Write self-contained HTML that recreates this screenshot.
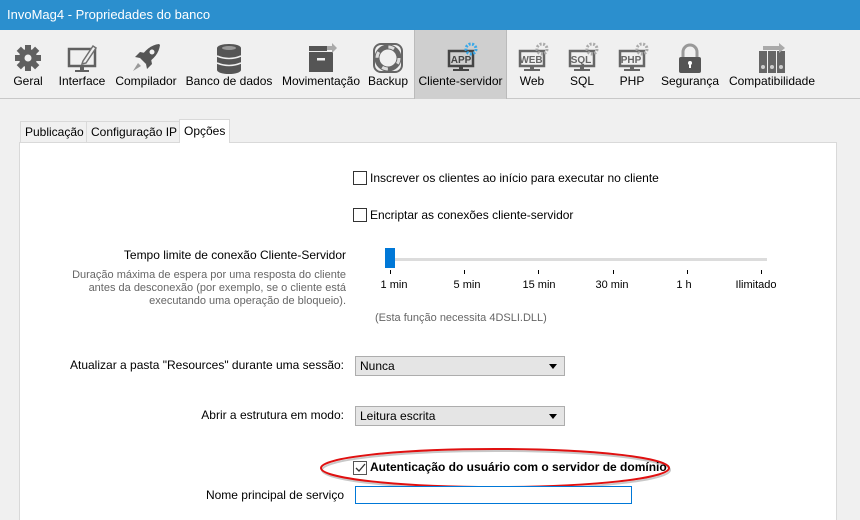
<!DOCTYPE html>
<html><head><meta charset="utf-8"><style>
*{margin:0;padding:0;box-sizing:border-box}
html{width:860px;height:520px;overflow:hidden}
body{width:860px;height:520px;overflow:hidden;background:#f0f0f0;font-family:"Liberation Sans",sans-serif;font-size:12px;color:#000;position:relative}
.a{position:absolute;white-space:nowrap}
#title{left:0;top:0;width:860px;height:30px;background:#2b8fce;color:#fff;font-size:13px;padding:7px 0 0 7px}
#tb{left:0;top:30px;width:860px;height:69px;border-bottom:1px solid #c8c8c8}
.ti{position:absolute;top:0;height:69px;text-align:center}
.ti span{position:absolute;left:0;right:0;top:44px;font-size:12px}
.ti svg{position:absolute;top:11px;left:50%;margin-left:-17px}
.tab{top:121px;height:22px;padding:3px 4px 0;border:1px solid #d9d9d9;border-bottom:none;background:#f0f0f0}
#panel{left:19px;top:142px;width:818px;height:380px;background:#fff;border:1px solid #d9d9d9;border-bottom:none}
.cb{width:14px;height:14px;border:1px solid #333;background:#fff}
.dd{height:20px;width:210px;background:#e5e5e5;border:1px solid #adadad;padding:2px 4px}
.dd:after{content:"";position:absolute;right:7px;top:7px;border:4px solid transparent;border-top:5px solid #000}
.r{text-align:right}
.g{color:#666;font-size:11px}
.tk{width:1px;height:4px;background:#000;top:270px}
.tl{top:279px;font-size:11px;transform:translateX(-50%)}
</style></head><body>
<div class="a" id="title">InvoMag4 - Propriedades do banco</div>
<div class="a" id="tb">
 <div class="ti" style="left:6px;width:44px"><svg width="34" height="34" viewBox="0 0 34 34"><g fill="#606060"><circle cx="17" cy="17" r="9"/><rect x="14" y="4" width="6" height="26"/><rect x="4" y="14" width="26" height="6"/><rect x="14" y="4" width="6" height="26" transform="rotate(45 17 17)"/><rect x="14" y="4" width="6" height="26" transform="rotate(-45 17 17)"/></g><circle cx="17" cy="17" r="3.5" fill="#f0f0f0"/></svg><span>Geral</span></div>
 <div class="ti" style="left:55px;width:54px"><svg width="34" height="34"><rect x="4" y="8" width="26" height="17" fill="none" stroke="#606060" stroke-width="2.5"/><rect x="15" y="25" width="4" height="4" fill="#606060"/><rect x="10" y="29" width="14" height="2" fill="#606060"/><path d="M18 20 L28 5 L31 7 L21 22 L17 23 Z" fill="#f0f0f0" stroke="#707070" stroke-width="1.5"/></svg><span>Interface</span></div>
 <div class="ti" style="left:113px;width:66px"><svg width="34" height="34"><path d="M30 3 C22 4 16 9 11 17 L17 23 C25 18 30 12 31 4 Z" fill="#555"/><path d="M11 17 L6 16 L11 11 L16 12 Z M17 23 L18 28 L23 23 L22 18Z" fill="#555"/><path d="M9 22 L4 30 L12 25 Z" fill="#999"/><circle cx="23" cy="11" r="2.5" fill="#f0f0f0"/></svg><span>Compilador</span></div>
 <div class="ti" style="left:184px;width:90px"><svg width="34" height="34"><ellipse cx="17" cy="7" rx="12" ry="4" fill="#555"/><rect x="5" y="7" width="24" height="22" fill="#555"/><ellipse cx="17" cy="29" rx="12" ry="4" fill="#555"/><ellipse cx="17" cy="7" rx="7" ry="2" fill="#999"/><path d="M5 15 Q17 20 29 15 M5 22 Q17 27 29 22" stroke="#f0f0f0" stroke-width="1.5" fill="none"/></svg><span>Banco de dados</span></div>
 <div class="ti" style="left:280px;width:82px"><svg width="34" height="34"><rect x="5" y="11" width="24" height="20" fill="#555"/><rect x="5" y="5" width="18" height="5" fill="#555"/><rect x="13" y="17" width="8" height="2.5" fill="#f0f0f0"/><path d="M23 5 h5 v-3 l5 5 l-5 5 v-3 h-5z" fill="#aaa"/></svg><span>Movimentação</span></div>
 <div class="ti" style="left:366px;width:44px"><svg width="34" height="34"><rect x="3" y="3" width="28" height="28" rx="7" fill="none" stroke="#666" stroke-width="2"/><circle cx="17" cy="17" r="11" fill="none" stroke="#666" stroke-width="5"/><circle cx="17" cy="17" r="11" fill="none" stroke="#ddd" stroke-width="3" stroke-dasharray="6 11.3"/></svg><span>Backup</span></div>
 <div class="ti" style="left:414px;width:93px;background:#cfcfcf;border-left:1px solid #bbb;border-right:1px solid #bbb"><svg width="34" height="34"><rect x="5" y="10" width="24" height="15" fill="none" stroke="#444" stroke-width="2.5"/><text x="17" y="22" font-size="10" font-weight="bold" text-anchor="middle" fill="#444" font-family="Liberation Sans">APP</text><rect x="15" y="25" width="4" height="3" fill="#444"/><rect x="9" y="28" width="16" height="2" fill="#444"/><circle cx="27" cy="8" r="5" fill="none" stroke="#3aa8e8" stroke-width="3" stroke-dasharray="2 1.5"/></svg><span>Cliente-servidor</span></div>
 <div class="ti" style="left:510px;width:44px"><svg width="34" height="34"><rect x="5" y="10" width="24" height="15" fill="none" stroke="#666" stroke-width="2.5"/><text x="16" y="22" font-size="10" font-weight="bold" text-anchor="middle" fill="#666" font-family="Liberation Sans">WEB</text><rect x="15" y="25" width="4" height="3" fill="#666"/><rect x="9" y="28" width="16" height="2" fill="#666"/><circle cx="27" cy="8" r="5" fill="none" stroke="#aaa" stroke-width="3" stroke-dasharray="2 1.5"/></svg><span>Web</span></div>
 <div class="ti" style="left:560px;width:44px"><svg width="34" height="34"><rect x="5" y="10" width="24" height="15" fill="none" stroke="#666" stroke-width="2.5"/><text x="16" y="22" font-size="10" font-weight="bold" text-anchor="middle" fill="#666" font-family="Liberation Sans">SQL</text><rect x="15" y="25" width="4" height="3" fill="#666"/><rect x="9" y="28" width="16" height="2" fill="#666"/><circle cx="27" cy="8" r="5" fill="none" stroke="#aaa" stroke-width="3" stroke-dasharray="2 1.5"/></svg><span>SQL</span></div>
 <div class="ti" style="left:610px;width:44px"><svg width="34" height="34"><rect x="5" y="10" width="24" height="15" fill="none" stroke="#666" stroke-width="2.5"/><text x="16" y="22" font-size="10" font-weight="bold" text-anchor="middle" fill="#666" font-family="Liberation Sans">PHP</text><rect x="15" y="25" width="4" height="3" fill="#666"/><rect x="9" y="28" width="16" height="2" fill="#666"/><circle cx="27" cy="8" r="5" fill="none" stroke="#aaa" stroke-width="3" stroke-dasharray="2 1.5"/></svg><span>PHP</span></div>
 <div class="ti" style="left:660px;width:60px"><svg width="34" height="34"><path d="M10 16 V11 a7 7 0 0 1 14 0 V16" fill="none" stroke="#999" stroke-width="3"/><rect x="6" y="16" width="22" height="16" rx="2" fill="#555"/><circle cx="17" cy="22" r="2" fill="#fff"/><rect x="16" y="22" width="2" height="5" fill="#fff"/></svg><span>Segurança</span></div>
 <div class="ti" style="left:726px;width:92px"><svg width="34" height="34"><g fill="#666"><rect x="4" y="10" width="8" height="22"/><rect x="13" y="10" width="8" height="22"/><rect x="22" y="10" width="8" height="22"/></g><g fill="#ccc"><circle cx="8" cy="26" r="2"/><circle cx="17" cy="26" r="2"/><circle cx="26" cy="26" r="2"/></g><path d="M8 5 h16 v-3 l6 5 l-6 5 v-3 h-16z" fill="#aaa"/></svg><span>Compatibilidade</span></div>
</div>
<div class="a tab" style="left:20px">Publicação</div>
<div class="a tab" style="left:86px">Configuração IP</div>
<div class="a" id="panel"></div>
<div class="a tab" style="left:179px;top:119px;height:24px;background:#fff;padding-top:4px">Opções</div>

<div class="a cb" style="left:353px;top:171px"></div><div class="a" style="left:370px;top:171px">Inscrever os clientes ao início para executar no cliente</div>
<div class="a cb" style="left:353px;top:208px"></div><div class="a" style="left:370px;top:208px">Encriptar as conexões cliente-servidor</div>

<div class="a r" style="right:514px;top:248px">Tempo limite de conexão Cliente-Servidor</div>
<div class="a r g" style="right:514px;top:269px;line-height:13px">Duração máxima de espera por uma resposta do cliente<br>antes da desconexão (por exemplo, se o cliente está<br>executando uma operação de bloqueio).</div>
<div class="a" style="left:390px;top:258px;width:377px;height:3px;background:#dcdcdc"></div>
<div class="a" style="left:385px;top:248px;width:10px;height:20px;background:#0078d7"></div>
<div class="a tk" style="left:390px"></div><div class="a tk" style="left:464px"></div><div class="a tk" style="left:538px"></div><div class="a tk" style="left:613px"></div><div class="a tk" style="left:687px"></div><div class="a tk" style="left:761px"></div>
<div class="a tl" style="left:394px">1 min</div><div class="a tl" style="left:467px">5 min</div><div class="a tl" style="left:539px">15 min</div><div class="a tl" style="left:612px">30 min</div><div class="a tl" style="left:684px">1 h</div><div class="a tl" style="left:756px">Ilimitado</div>
<div class="a g" style="left:375px;top:312px">(Esta função necessita 4DSLI.DLL)</div>

<div class="a r" style="right:516px;top:358px">Atualizar a pasta "Resources" durante uma sessão:</div>
<div class="a dd" style="left:355px;top:356px">Nunca</div>
<div class="a r" style="right:516px;top:408px">Abrir a estrutura em modo:</div>
<div class="a dd" style="left:355px;top:406px">Leitura escrita</div>

<svg class="a" style="left:318px;top:446px" width="356" height="46"><ellipse cx="178" cy="24" rx="174" ry="19" fill="none" stroke="#c8c8c8" stroke-width="2"/><ellipse cx="177" cy="22" rx="174" ry="19" fill="none" stroke="#e01010" stroke-width="2"/></svg>
<div class="a cb" style="left:353px;top:461px;border-color:#555"><svg width="12" height="12" style="position:absolute;left:0;top:0"><path d="M2 6 L5 9 L11 2" stroke="#333" stroke-width="1.3" fill="none"/></svg></div>
<div class="a" style="left:370px;top:460px;font-weight:bold">Autenticação do usuário com o servidor de domínio</div>
<div class="a r" style="right:516px;top:488px">Nome principal de serviço</div>
<div class="a" style="left:355px;top:486px;width:277px;height:18px;border:1px solid #0078d7;background:#fff"></div>
</body></html>
